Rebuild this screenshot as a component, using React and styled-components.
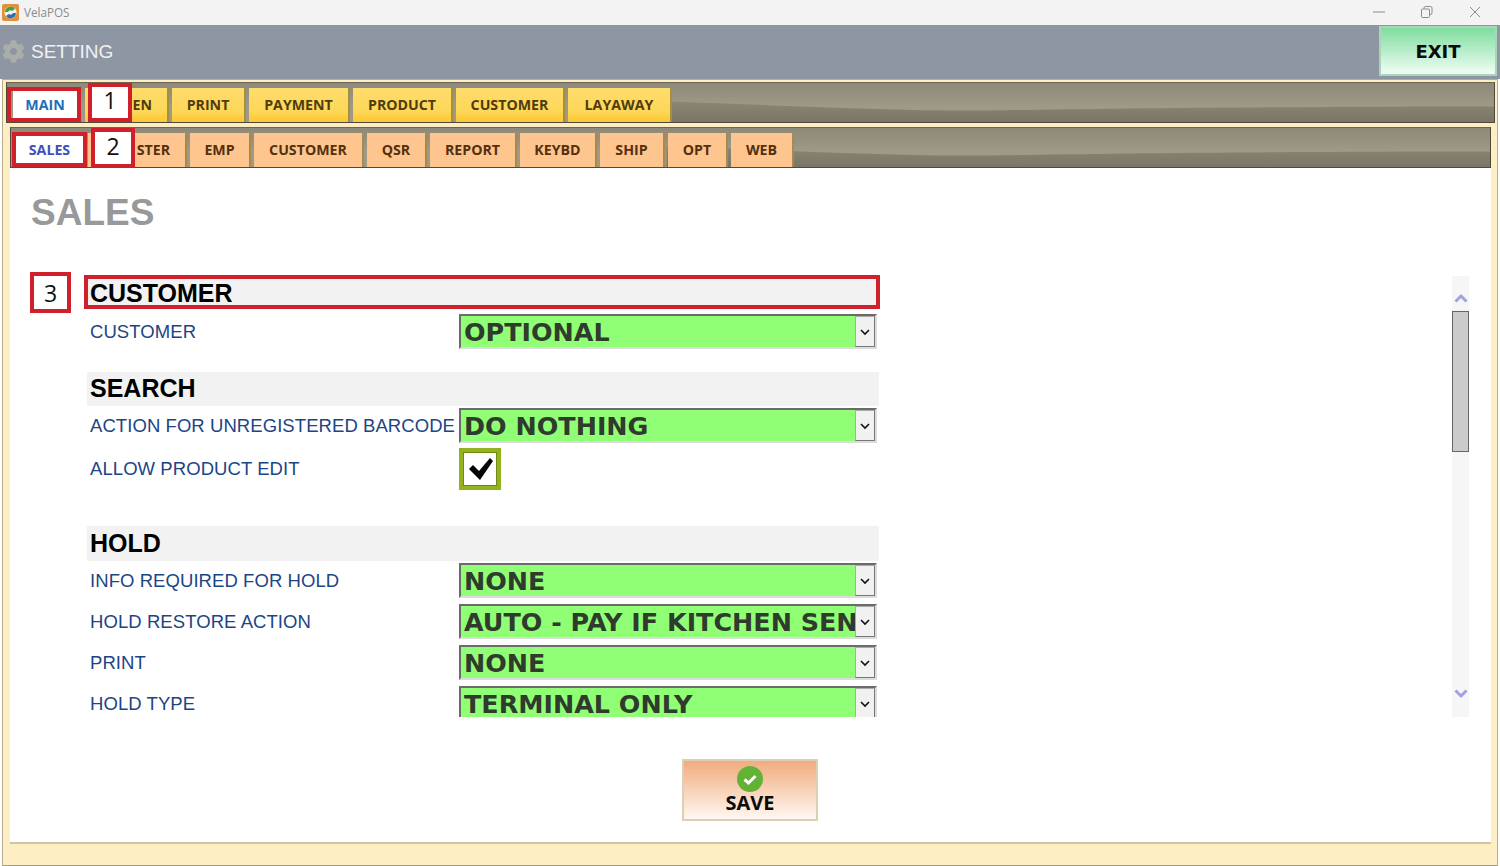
import styled, { createGlobalStyle } from 'styled-components';
import { FaCog } from 'react-icons/fa';

// the first tab after the active one is partly hidden by the callout, only its end shows
const mainTabs = [
  { label: 'EN', width: 82 },
  { label: 'PRINT', width: 72 },
  { label: 'PAYMENT', width: 99 },
  { label: 'PRODUCT', width: 98 },
  { label: 'CUSTOMER', width: 107 },
  { label: 'LAYAWAY', width: 102 },
];
const subTabs = [
  { label: 'STER', width: 97 },
  { label: 'EMP', width: 59 },
  { label: 'CUSTOMER', width: 108 },
  { label: 'QSR', width: 58 },
  { label: 'REPORT', width: 85 },
  { label: 'KEYBD', width: 75 },
  { label: 'SHIP', width: 63 },
  { label: 'OPT', width: 58 },
  { label: 'WEB', width: 61 },
];

const GlobalStyle = createGlobalStyle`
  html, body {
    margin: 0;
    padding: 0;
    background: #fff;
  }
  * {
    box-sizing: border-box;
  }
`;

const Page = styled.div`
  position: relative;
  width: 1500px;
  height: 866px;
  overflow: hidden;
  display: flex;
  flex-direction: column;
  font-family: 'Liberation Sans', Arial, sans-serif;
`;

const TitleBar = styled.div`
  height: 25px;
  flex-shrink: 0;
  display: flex;
  align-items: center;
  background: #f3f3f3;
  padding-left: 2px;
`;

const AppName = styled.span`
  margin: 0 0 2px 5px;
  font-family: 'Open Sans', sans-serif;
  font-size: 11.7px;
  color: #8a8a8a;
`;

const WindowControls = styled.div`
  margin-left: auto;
  margin-bottom: 2px;
  display: flex;
  align-items: center;
  gap: 36px;
  padding-right: 19px;
  color: #8a8a8a;
`;

const Header = styled.div`
  height: 54px;
  flex-shrink: 0;
  display: flex;
  align-items: flex-start;
  justify-content: space-between;
  background: #8e96a4;
  padding: 0 3px 0 2px;
`;

const HeaderTitle = styled.div`
  height: 53px;
  display: flex;
  align-items: center;
  gap: 6px;
  font-size: 19px;
  color: #f1f2f3;
  svg {
    color: #aaadaa;
  }
`;

const ExitButton = styled.button`
  width: 118px;
  height: 50px;
  margin-top: 1px;
  padding: 0;
  border: 2px solid #a9d6b6;
  background: linear-gradient(#7fdd9f, #f1fdf5);
  font-family: 'DejaVu Sans', Verdana, sans-serif;
  font-weight: 700;
  font-size: 18px;
  color: #0b0b0b;
`;

const Frame = styled.div`
  flex: 1;
  display: flex;
  flex-direction: column;
  margin: 0 2px;
  padding: 2px 2px 0 3px;
  background: #fdeec4;
  border: 1px solid #b9ad8e;
  border-bottom: 1px solid #a79c80;
`;

const TabBar = styled.div`
  position: relative;
  height: 41px;
  margin: ${({ $sub }) => ($sub ? '4px 4px 0 4px' : '0')};
  padding: ${({ $sub }) => ($sub ? '5px 0 0 5px' : '5px 0 0 6px')};
  display: flex;
  gap: 5px;
  border: 1px solid #4f4a3c;
  border-top-color: #6a6555;
  background: #857f6f;
  overflow: hidden;
`;

const Wave = styled.svg`
  position: absolute;
  inset: 0;
  width: 100%;
  height: 100%;
`;

const Tab = styled.div`
  position: relative;
  width: ${({ $width }) => $width}px;
  height: 34px;
  padding-bottom: 2px;
  flex-shrink: 0;
  display: flex;
  align-items: center;
  justify-content: center;
  font-family: 'Open Sans', sans-serif;
  font-weight: 700;
  font-size: 14.2px;
  font-kerning: none;
  color: ${({ $sub }) => ($sub ? '#54300f' : '#4f3c0c')};
  background: ${({ $sub }) =>
    $sub ? '#fec58f' : 'linear-gradient(#fedc6e 0%, #fdd756 70%, #fcc732 100%)'};
  box-shadow: 2px 0 0 ${({ $sub }) => ($sub ? '#a88a50' : '#a59042')};
`;

const HiddenTab = styled(Tab)`
  justify-content: flex-end;
  padding-right: 15px;
`;

const ActiveTab = styled(Tab)`
  margin-right: ${({ $sub }) => ($sub ? '0' : '3px')};
  background: #fff;
  color: ${({ $sub }) => ($sub ? '#3c50b9' : '#1c6fbb')};
  box-shadow: none;
`;

const Content = styled.div`
  height: 676px;
  flex-shrink: 0;
  margin: 0 4px;
  display: flex;
  flex-direction: column;
  background: #fff;
  border-bottom: 2px solid #cfc4a5;
`;

const PageTitle = styled.h1`
  height: 108px;
  flex-shrink: 0;
  margin: 0;
  padding: 22px 0 0 21px;
  font-size: 37px;
  line-height: 45px;
  font-weight: 700;
  color: #999;
`;

const Pane = styled.div`
  height: 441px;
  flex-shrink: 0;
  margin: 0 22px 0 75px;
  display: flex;
  overflow: hidden;
`;

const List = styled.div`
  flex: 1;
  padding: 2px 0 0 2px;
  overflow: hidden;
`;

const SectionHeader = styled.div`
  width: 792px;
  height: ${({ $h }) => $h}px;
  margin-top: ${({ $gap }) => $gap}px;
  padding: 0 0 1px 3px;
  display: flex;
  align-items: center;
  background: #f2f2f2;
  font-size: 25px;
  font-weight: 700;
  color: #000;
`;

const Row = styled.div`
  width: 792px;
  height: ${({ $h }) => $h || 35}px;
  margin-top: ${({ $gap }) => $gap}px;
  display: flex;
  align-items: center;
`;

const Label = styled.div`
  width: 372px;
  padding-left: 3px;
  flex-shrink: 0;
  font-size: 18.5px;
  letter-spacing: 0.07px;
  color: #1c4585;
  white-space: nowrap;
`;

const Select = styled.div`
  position: relative;
  width: 418px;
  height: 35px;
  padding-left: 3px;
  display: flex;
  align-items: center;
  overflow: hidden;
  background: #91ff75;
  border: 2px solid #dcdcdc;
  border-top-color: #6b6b6b;
  border-left-color: #6b6b6b;
  font-family: 'DejaVu Sans', Verdana, sans-serif;
  font-weight: 700;
  font-size: 25.4px;
  color: #2f3b2c;
  white-space: nowrap;
`;

const SelectArrow = styled.div`
  position: absolute;
  top: 0;
  right: 0;
  width: 20px;
  height: 100%;
  display: flex;
  align-items: center;
  justify-content: center;
  background: #f1f1f1;
  border: 1px solid #777;
  border-top-color: #aaa;
  border-left-color: #aaa;
`;

const CheckBox = styled.div`
  width: 42px;
  height: 42px;
  display: flex;
  align-items: center;
  justify-content: center;
  background: #fff;
  border: 4px solid #94b21d;
  box-shadow: inset 0 0 0 1px #6f8a12;
`;

const ScrollBar = styled.div`
  width: 17px;
  height: 100%;
  flex-shrink: 0;
  display: flex;
  flex-direction: column;
  align-items: center;
  background: #f6f6f6;
`;

const ScrollArrow = styled.div`
  height: 35px;
  width: 100%;
  flex-shrink: 0;
  margin-top: ${({ $down }) => ($down ? 'auto' : '0')};
  padding: ${({ $down }) => ($down ? '0 0 11px' : '9px 0 0')};
  display: flex;
  align-items: center;
  justify-content: center;
`;

const ScrollThumb = styled.div`
  width: 100%;
  height: 141px;
  flex-shrink: 0;
  background: #cbcbcb;
  border: 1px solid #666;
`;

const SaveRow = styled.div`
  display: flex;
  justify-content: center;
  margin-top: 42px;
  padding-right: 1px;
`;

const SaveButton = styled.button`
  width: 136px;
  height: 62px;
  padding: 5px 0 0;
  display: flex;
  flex-direction: column;
  align-items: center;
  background: linear-gradient(#f0ac7e, #fff7f1);
  border: 2px solid #dccfb5;
  font-family: 'Open Sans', sans-serif;
  font-size: 20px;
  line-height: 22px;
  font-weight: 700;
  color: #0c0c0c;
`;

const Footer = styled.div`
  flex: 1;
`;

const RedBox = styled.div`
  position: absolute;
  left: ${({ $x }) => $x}px;
  top: ${({ $y }) => $y}px;
  width: ${({ $w }) => $w}px;
  height: ${({ $h }) => $h}px;
  padding-bottom: ${({ $pad }) => $pad || 0}px;
  border: 4px solid #d0202c;
  display: flex;
  align-items: center;
  justify-content: center;
  background: ${({ $tag }) => ($tag ? '#fff' : 'transparent')};
  font-family: 'Open Sans', sans-serif;
  font-size: 23px;
  color: #111;
`;

const Chevron = () => (
  <svg width="12" height="8" viewBox="0 0 12 8">
    <path d="M2 2l4 4 4-4" fill="none" stroke="#111" strokeWidth="1.6" />
  </svg>
);

const WaveShape = ({ id }) => (
  <Wave viewBox="0 0 1489 40" preserveAspectRatio="none">
    <defs>
      <linearGradient id={`${id}-top`} x1="0" y1="0" x2="0" y2="1">
        <stop offset="0" stopColor="#8e8978" />
        <stop offset="0.6" stopColor="#9f9987" />
      </linearGradient>
      <linearGradient id={`${id}-low`} x1="0" y1="0" x2="0" y2="1">
        <stop offset="0" stopColor="#8b8574" />
        <stop offset="1" stopColor="#7a7566" />
      </linearGradient>
    </defs>
    <rect width="1489" height="40" fill={`url(#${id}-top)`} />
    <path d="M660 19C760 22 900 30 1000 28S1300 24 1489 24V40H660Z" fill={`url(#${id}-low)`} />
  </Wave>
);

const Logo = () => (
  <svg width="17" height="17" viewBox="0 0 17 17">
    <rect width="17" height="17" rx="2" fill="#e2913a" />
    <circle cx="8.5" cy="8.5" r="6" fill="#f2f2f2" />
    <path d="M3 8a5.5 5.5 0 0 1 10-3l-3 2a2.5 2.5 0 0 0-4 1z" fill="#4f9d3a" />
    <path d="M14 9a5.5 5.5 0 0 1-10 3l3-2a2.5 2.5 0 0 0 4-1z" fill="#2a6fae" />
  </svg>
);

const Controls = () => (
  <WindowControls>
    <svg width="12" height="12" viewBox="0 0 12 12">
      <path d="M0 6h12" stroke="currentColor" fill="none" />
    </svg>
    <svg width="12" height="12" viewBox="0 0 12 12">
      <path d="M3 2.500V2a1.500 1.500 0 0 1 1.500-1.500h5A1.500 1.500 0 0 1 11 2v5a1.500 1.500 0 0 1-1.500 1.500H9M1.500 3h6A1 1 0 0 1 8.500 4v6.500a1 1 0 0 1-1 1h-6a1 1 0 0 1-1-1V4a1 1 0 0 1 1-1z" stroke="currentColor" fill="none" />
    </svg>
    <svg width="12" height="12" viewBox="0 0 12 12">
      <path d="M1 1l10 10M11 1L1 11" stroke="currentColor" fill="none" />
    </svg>
  </WindowControls>
);

const Field = ({ label, value, gap }) => (
  <Row $gap={gap}>
    <Label>{label}</Label>
    <Select>
      {value}
      <SelectArrow>
        <Chevron />
      </SelectArrow>
    </Select>
  </Row>
);

const TabList = ({ tabs, sub }) =>
  tabs.map((t, i) => {
    const Item = i === 0 ? HiddenTab : Tab;
    return (
      <Item key={t.label} $sub={sub} $width={t.width}>
        {t.label}
      </Item>
    );
  });

export default function App() {
  return (
    <Page>
      <GlobalStyle />
      <TitleBar>
        <Logo />
        <AppName>VelaPOS</AppName>
        <Controls />
      </TitleBar>
      <Header>
        <HeaderTitle>
          <FaCog size={23} />
          SETTING
        </HeaderTitle>
        <ExitButton>EXIT</ExitButton>
      </Header>
      <Frame>
        <TabBar>
          <WaveShape id="main" />
          <ActiveTab $width={64}>MAIN</ActiveTab>
          <TabList tabs={mainTabs} />
        </TabBar>
        <TabBar $sub>
          <WaveShape id="sub" />
          <ActiveTab $sub $width={67}>SALES</ActiveTab>
          <TabList tabs={subTabs} sub />
        </TabBar>
        <Content>
          <PageTitle>SALES</PageTitle>
          <Pane>
            <List>
              <SectionHeader $h={31} $gap={0}>CUSTOMER</SectionHeader>
              <Field label="CUSTOMER" value="OPTIONAL" gap={5} />

              <SectionHeader $h={34} $gap={23}>SEARCH</SectionHeader>
              <Field label="ACTION FOR UNREGISTERED BARCODE" value="DO NOTHING" gap={2} />
              <Row $gap={5} $h={42}>
                <Label>ALLOW PRODUCT EDIT</Label>
                <CheckBox>
                  <svg width="28" height="26" viewBox="0 0 28 26">
                    <path d="M3 13L7 9l6 6L24 2l3 3-13 19z" fill="#050505" />
                  </svg>
                </CheckBox>
              </Row>

              <SectionHeader $h={35} $gap={36}>HOLD</SectionHeader>
              <Field label="INFO REQUIRED FOR HOLD" value="NONE" gap={2} />
              <Field label="HOLD RESTORE ACTION" value="AUTO - PAY IF KITCHEN SENT" gap={6} />
              <Field label="PRINT" value="NONE" gap={6} />
              <Field label="HOLD TYPE" value="TERMINAL ONLY" gap={6} />
            </List>
            <ScrollBar>
              <ScrollArrow>
                <svg width="14" height="10" viewBox="0 0 14 10">
                  <path d="M1.500 8.500L7 3l5.500 5.500" fill="none" stroke="#a0a2e2" strokeWidth="3" />
                </svg>
              </ScrollArrow>
              <ScrollThumb />
              <ScrollArrow $down>
                <svg width="14" height="10" viewBox="0 0 14 10">
                  <path d="M1.500 1.500L7 7l5.500-5.500" fill="none" stroke="#a0a2e2" strokeWidth="3" />
                </svg>
              </ScrollArrow>
            </ScrollBar>
          </Pane>
          <SaveRow>
            <SaveButton>
              <svg width="26" height="26" viewBox="0 0 26 26">
                <circle cx="13" cy="13" r="13" fill="#62b236" />
                <path d="M7.500 13.500l4 3.500 7-7" fill="none" stroke="#fff" strokeWidth="3" />
              </svg>
              SAVE
            </SaveButton>
          </SaveRow>
        </Content>
        <Footer />
      </Frame>

      <RedBox $x={7} $y={87} $w={74} $h={35} />
      <RedBox $tag $pad={5} $x={88} $y={83} $w={44} $h={39}>1</RedBox>
      <RedBox $x={12} $y={132} $w={75} $h={35} />
      <RedBox $tag $pad={5} $x={91} $y={128} $w={44} $h={40}>2</RedBox>
      <RedBox $tag $x={30} $y={272} $w={41} $h={41}>3</RedBox>
      <RedBox $x={84} $y={275} $w={796} $h={34} />
    </Page>
  );
}
